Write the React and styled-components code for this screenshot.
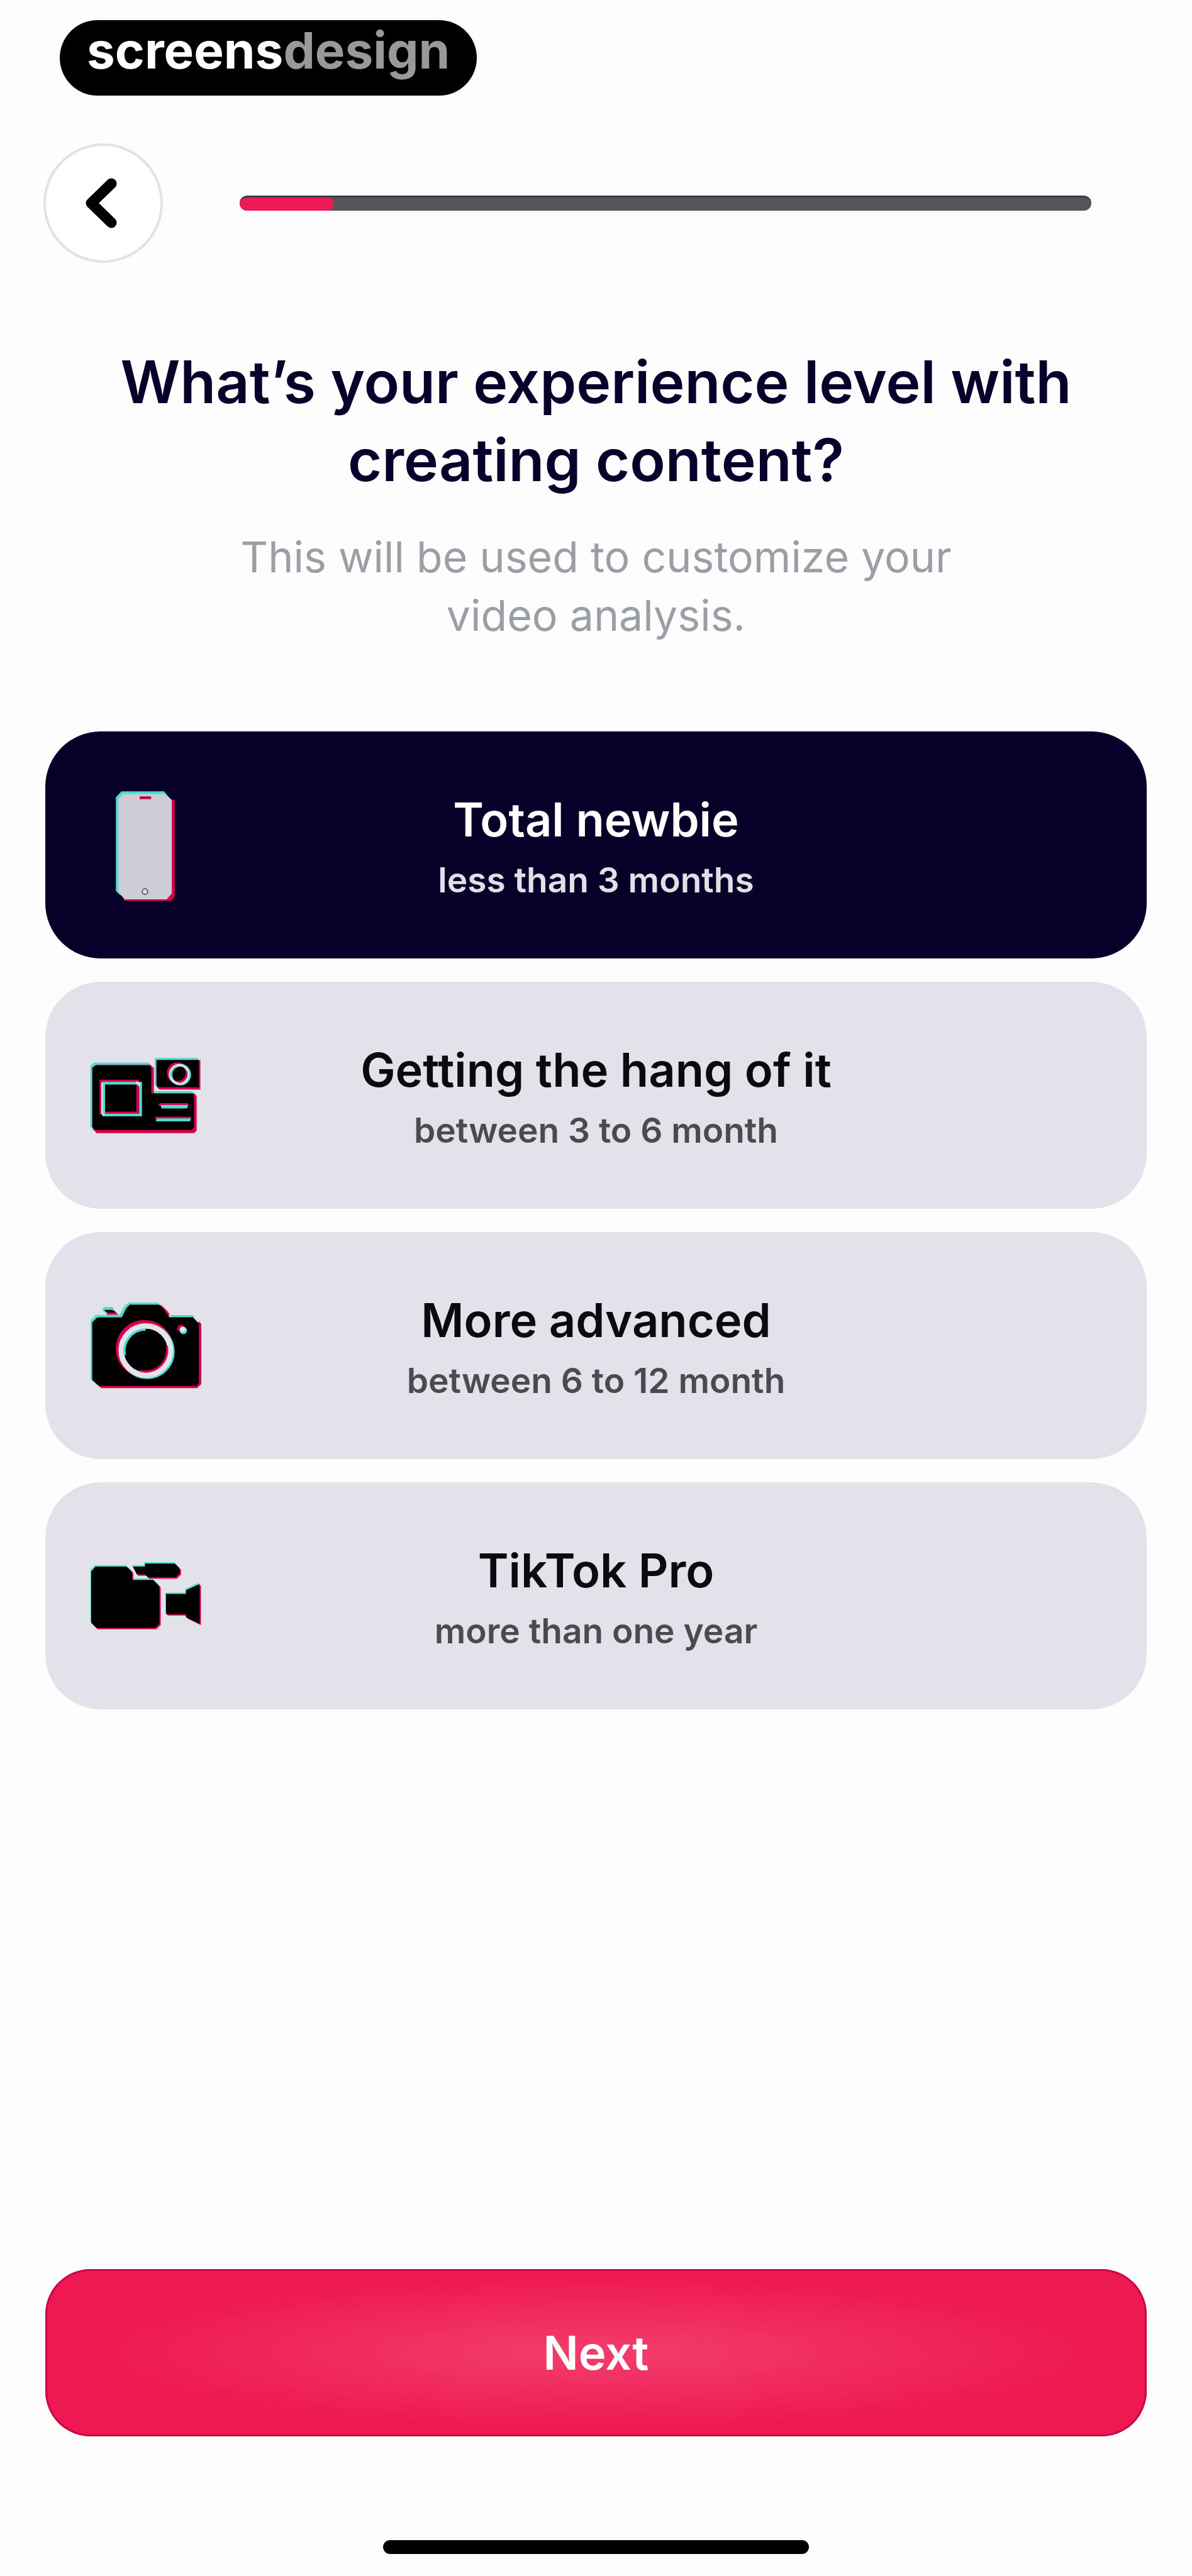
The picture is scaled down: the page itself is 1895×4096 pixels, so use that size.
import React, { useState } from "react";
import styled, { createGlobalStyle } from "styled-components";

const CYAN = "#4fdccf";
const PINK = "#d8004c";

const GlobalStyle = createGlobalStyle`
  *, *::before, *::after { box-sizing: border-box; }
  body {
    margin: 0;
    background: #fdfdfd;
    font-family: Inter, "Liberation Sans", sans-serif;
  }
  button { font: inherit; border: 0; padding: 0; cursor: pointer; }
`;

const Screen = styled.div`
  min-height: 100vh;
  display: flex;
  flex-direction: column;
  padding: 32px 72px 35px;
`;

const Brand = styled.a`
  align-self: flex-start;
  display: flex;
  align-items: center;
  height: 120px;
  margin-left: 23px;
  padding: 0 43px 24px;
  border-radius: 60px;
  background: #000;
  color: #fff;
  font-size: 80px;
  font-weight: 700;
  line-height: 96px;
  text-decoration: none;
`;

const BrandTail = styled.span`
  color: #999;
`;

const TopBar = styled.header`
  display: flex;
  align-items: center;
  gap: 122px;
  margin: 76px 88px 0 -3px;
`;

const BackButton = styled.button`
  flex: none;
  display: grid;
  place-items: center;
  width: 190px;
  height: 190px;
  border: 4px solid #e4e1e3;
  border-radius: 50%;
  background: #fff;
`;

const Track = styled.div`
  flex: 1;
  height: 24px;
  border-radius: 12px;
  border-top: 3px solid #3d3b40;
  background: #58555a;
  overflow: hidden;
`;

const Fill = styled.div`
  height: 100%;
  border-radius: 0 8px 8px 0;
  background: #ee1957;
`;

const Title = styled.h1`
  margin: 127px 0 0;
  color: #08002b;
  font-size: 93px;
  font-weight: 600;
  line-height: 124px;
  text-align: center;
`;

const Subtitle = styled.p`
  max-width: 1240px;
  margin: 46px auto 0;
  color: #9a9fa6;
  font-size: 68px;
  font-weight: 400;
  line-height: 93px;
  text-align: center;
`;

const Options = styled.fieldset`
  display: grid;
  gap: 37px;
  min-width: 0;
  margin: 138px 0 0;
  padding: 0;
  border: 0;
`;

const Option = styled.label`
  display: grid;
  grid-template-columns: 176px 1fr 176px;
  align-items: center;
  height: 361px;
  padding: 0 72px;
  border-radius: 88px;
  background: ${(p) => (p.$selected ? "#090029" : "#e3e1ea")};
  color: ${(p) => (p.$selected ? "#fff" : "#0c0a10")};
  cursor: pointer;
`;

const HiddenRadio = styled.input`
  position: absolute;
  opacity: 0;
  pointer-events: none;
`;

const OptionText = styled.span`
  display: grid;
  gap: 18px;
  text-align: center;
`;

const OptionTitle = styled.span`
  font-size: 74px;
  font-weight: 600;
  line-height: 92px;
`;

const OptionNote = styled.span`
  color: ${(p) => (p.$selected ? "#e2dfe6" : "#4c4a50")};
  font-size: 55px;
  font-weight: 600;
  line-height: 64px;
`;

const Icon = styled.svg`
  display: block;
  width: 176px;
  height: 176px;
  overflow: visible;
`;

const Footer = styled.footer`
  display: grid;
  gap: 165px;
  margin-top: auto;
`;

const NextButton = styled.button`
  height: 266px;
  border-radius: 72px;
  box-shadow: inset 0 0 0 3px #c80945;
  background: radial-gradient(ellipse 46% 46% at 50% 50%, #f23e6d 0%, #ee1853 100%);
  color: #fff;
  font-size: 74px;
  font-weight: 600;
  line-height: 92px;
`;

const HomeIndicator = styled.div`
  justify-self: center;
  width: 677px;
  height: 22px;
  border-radius: 11px;
  background: #000;
`;

function PhoneIcon() {
  return (
    <Icon viewBox="0 0 600 600" aria-hidden="true">
      <path d="M168 8H398L430 46V540L400 570H160L137 548V40Z" fill={CYAN} />
      <path d="M200 54H456V578L434 602H182Z" fill={PINK} />
      <path d="M176 22H402L440 54V562L412 593H184L150 552V50Z" fill="#cfccd9" />
      <rect x="266" y="35" width="62" height="15" fill="#b8003f" />
      <circle cx="295" cy="551" r="15" fill="#dedbe4" stroke="#5c4f66" strokeWidth="6" />
    </Icon>
  );
}

function ActionCamIcon() {
  const body = "M157 205H450L470 222V360H690L702 376V562L688 576H160L138 552V222Z";
  const head = "M487 180H722V340H500L487 326Z";
  return (
    <Icon viewBox="133 77 600 600" aria-hidden="true">
      <g fill={CYAN} transform="translate(-6 -7)">
        <path d={body} />
        <path d={head} />
      </g>
      <g fill={PINK} transform="translate(6 5)">
        <path d={body} />
        <path d={head} />
      </g>
      <path d="M157 214H450L462 226V366H686L694 378V550L682 564H160L142 548V228Z" />
      <path d="M490 184H720V332H500L490 322Z" />
      <g fill="none">
        <rect x="188" y="298" width="200" height="174" stroke={PINK} strokeWidth="14" />
        <rect x="204" y="310" width="200" height="172" stroke={CYAN} strokeWidth="15" />
        <path d="M195 306V474L206 484M380 304L396 322V310Z" stroke="#e3e1ea" strokeWidth="8" />
        <path d="M388 322V470H212" stroke={PINK} strokeWidth="10" />
        <circle cx="605" cy="254" r="51" stroke={PINK} strokeWidth="14" />
        <circle cx="620" cy="264" r="51" stroke={CYAN} strokeWidth="14" />
        <circle cx="613" cy="262" r="50" stroke="#e3e1ea" strokeWidth="12" />
        <path d="M651 244A43 43 0 0 1 610 304" stroke={PINK} strokeWidth="9" />
        <path d="M569 278A46 46 0 0 1 610 219" stroke={CYAN} strokeWidth="6" />
      </g>
      <path d="M508 418H662V432H514L498 432Z" fill={PINK} />
      <path d="M512 428H662L656 447H518Z" fill={CYAN} />
      <path d="M482 491H678V502H490L484 510Z" fill={PINK} />
      <path d="M492 501H678L672 517H486Z" fill={CYAN} />
    </Icon>
  );
}

function CameraIcon() {
  const body = "M346 132H505L535 160L562 198H688L722 234V560L700 582H180L140 546V228L168 198H298L322 152Z";
  return (
    <Icon viewBox="133 59 600 600" aria-hidden="true">
      <path d={body} fill={CYAN} transform="translate(-7 -7)" />
      <path d={body} fill={PINK} transform="translate(11 6)" />
      <path d="M560 188H690L724 222L712 240H550Z" fill="#e3e1ea" />
      <path d="M550 192H686L700 204L600 214Z" fill={CYAN} />
      <path d="M346 136H503L530 160L560 204H688L720 238V562L706 576H178L142 544V232L168 206H302L326 156Z" />
      <path d="M206 148H250L262 160L250 190H226L196 166Z" fill={CYAN} />
      <path d="M222 174L262 168L284 190H222Z" fill={PINK} />
      <path d="M206 164H250L270 178H220Z" />
      <g fill="none">
        <circle cx="425" cy="374" r="144" stroke={PINK} strokeWidth="22" />
        <circle cx="440" cy="390" r="138" stroke={CYAN} strokeWidth="22" />
        <circle cx="432" cy="384" r="133" stroke="#e6e2ec" strokeWidth="30" />
        <path d="M319 410A116 116 0 0 1 432 270" stroke={CYAN} strokeWidth="12" />
        <path d="M546 360A116 116 0 0 1 400 494" stroke={PINK} strokeWidth="12" />
      </g>
      <circle cx="624" cy="264" r="20" fill={PINK} />
      <circle cx="636" cy="276" r="20" fill={CYAN} />
      <circle cx="632" cy="270" r="15" fill="#e3e1ea" />
    </Icon>
  );
}

function CamcorderIcon() {
  const parts = (
    <>
      <path d="M160 180H328L358 208V252H472L506 286V490L482 512H164L136 484V206Z" />
      <path d="M362 180H428V164H590L616 190V216L594 238H444L428 222H384Z" />
      <path d="M542 328H650V308L724 274V490L650 454V438H542Z" />
    </>
  );
  return (
    <Icon viewBox="133 40 600 600" aria-hidden="true">
      <g fill={CYAN} transform="translate(-4 -8)">{parts}</g>
      <g fill={PINK} transform="translate(7 7)">{parts}</g>
      <g>{parts}</g>
    </Icon>
  );
}

const OPTIONS = [
  { id: "newbie", title: "Total newbie", note: "less than 3 months", Art: PhoneIcon },
  { id: "learning", title: "Getting the hang of it", note: "between 3 to 6 month", Art: ActionCamIcon },
  { id: "advanced", title: "More advanced", note: "between 6 to 12 month", Art: CameraIcon },
  { id: "pro", title: "TikTok Pro", note: "more than one year", Art: CamcorderIcon },
];

export default function App() {
  const [selected, setSelected] = useState("newbie");
  const progress = 11;

  return (
    <>
      <GlobalStyle />
      <Screen>
        <Brand href="#">
          screens<BrandTail>design</BrandTail>
        </Brand>
        <TopBar>
          <BackButton type="button" aria-label="Back">
            <svg width="58" height="80" viewBox="0 0 58 80" fill="none" aria-hidden="true">
              <path d="M42 9L10 40L42 71" stroke="#000" strokeWidth="17" strokeLinecap="round" strokeLinejoin="round" />
            </svg>
          </BackButton>
          <Track role="progressbar" aria-label="Progress" aria-valuenow={progress} aria-valuemin={0} aria-valuemax={100}>
            <Fill style={{ width: `${progress}%` }} />
          </Track>
        </TopBar>
        <main>
          <Title>What’s your experience level with creating content?</Title>
          <Subtitle>This will be used to customize your video analysis.</Subtitle>
          <Options aria-label="Experience level">
            {OPTIONS.map(({ id, title, note, Art }) => (
              <Option key={id} $selected={selected === id}>
                <HiddenRadio
                  type="radio"
                  name="experience"
                  value={id}
                  checked={selected === id}
                  onChange={() => setSelected(id)}
                />
                <Art />
                <OptionText>
                  <OptionTitle>{title}</OptionTitle>
                  <OptionNote $selected={selected === id}>{note}</OptionNote>
                </OptionText>
              </Option>
            ))}
          </Options>
        </main>
        <Footer>
          <NextButton type="button">Next</NextButton>
          <HomeIndicator />
        </Footer>
      </Screen>
    </>
  );
}
